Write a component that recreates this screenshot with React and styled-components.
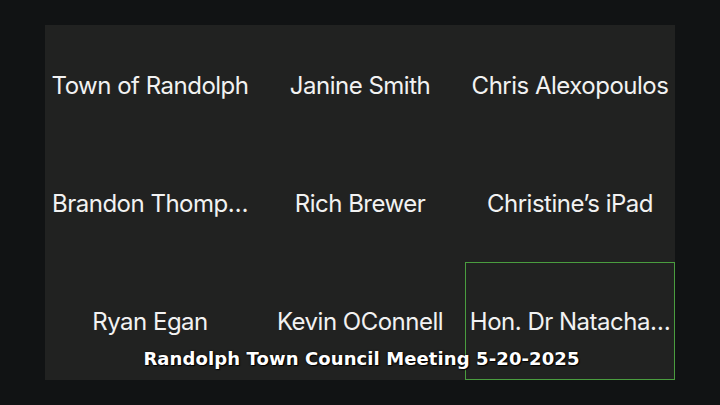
import styled, { createGlobalStyle } from "styled-components";

const GlobalStyle = createGlobalStyle`
  html, body {
    margin: 0;
    padding: 0;
    background: #111314;
  }
`;

const Page = styled.main`
  width: 720px;
  height: 405px;
  box-sizing: border-box;
  padding: 25px 45px;
  background: #111314;
`;

const Gallery = styled.div`
  position: relative;
  height: 100%;
  display: grid;
  grid-template-columns: repeat(3, 1fr);
  grid-template-rows: repeat(3, 1fr);
  background: #212221;
`;

const Tile = styled.div`
  display: flex;
  align-items: center;
  justify-content: center;
  box-sizing: border-box;
  padding-top: 2px;
  border: 1px solid ${(p) => (p.$active ? "#4a9d3f" : "transparent")};
  min-width: 0;
`;

const Name = styled.span`
  color: #f2f2f2;
  font-family: Inter, "Noto Sans", sans-serif;
  font-size: 24px;
  letter-spacing: -0.5px;
  white-space: nowrap;
`;

const Caption = styled.div`
  position: absolute;
  left: 0;
  right: 0;
  bottom: 11px;
  padding-left: 3px;
  text-align: center;
  color: #ffffff;
  font-family: "DejaVu Sans", sans-serif;
  font-weight: bold;
  font-size: 18px;
  letter-spacing: 0.1px;
  text-shadow: 1px 1px 1px #000, 0 0 2px #000;
  pointer-events: none;
`;

const participants = [
  "Town of Randolph",
  "Janine Smith",
  "Chris Alexopoulos",
  "Brandon Thomp…",
  "Rich Brewer",
  "Christine’s iPad",
  "Ryan Egan",
  "Kevin OConnell",
  "Hon. Dr Natacha…",
];

export default function App() {
  return (
    <>
      <GlobalStyle />
      <Page>
        <Gallery>
          {participants.map((name, i) => (
            <Tile key={name} $active={i === 8}>
              <Name>{name}</Name>
            </Tile>
          ))}
          <Caption>Randolph Town Council Meeting 5-20-2025</Caption>
        </Gallery>
      </Page>
    </>
  );
}
